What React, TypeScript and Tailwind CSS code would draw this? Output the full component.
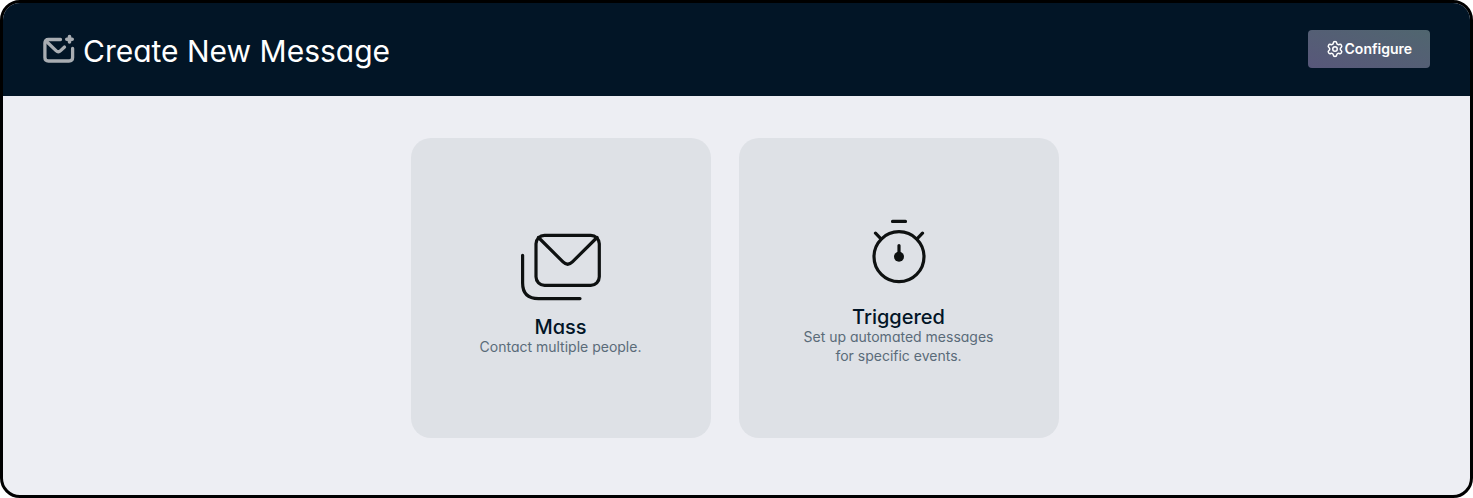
import { Settings } from 'lucide-react';
import type { ReactNode } from 'react';

interface MessageTypeCardProps {
  title: string;
  description: string;
  icon: ReactNode;
}

function NewMessageIcon() {
  return (
    <svg className="h-8 w-8 shrink-0" viewBox="0 0 32 32" fill="none" stroke="#a9adb2" strokeWidth="3.3" strokeLinecap="round" strokeLinejoin="round" aria-hidden="true">
      <path d="M17.5 6.5H5.5Q1.9 6.5 1.9 10V24.5Q1.9 28 5.5 28H26Q29.6 28 29.6 24.5V15.5" />
      <path d="M3 8L13 17.6Q15.3 19.8 17.6 17.6L21.5 14" />
      <path d="M26.5 3.6V9M23.8 6.3H29.2" strokeWidth="3.6" />
    </svg>
  );
}

function MassIcon() {
  return (
    <svg className="h-24 w-24" viewBox="0 1 96 96" fill="none" stroke="#0e1111" strokeWidth="3.2" strokeLinecap="round" strokeLinejoin="round" aria-hidden="true">
      <rect x="23" y="15.3" width="63.3" height="50" rx="8.5" />
      <path d="M25.5 17.5L50 41.9Q54.7 46.5 59.4 41.9L84 17.5" />
      <path d="M9.6 35.3V63Q9.6 78.6 25.5 78.6H67" />
    </svg>
  );
}

function TriggeredIcon() {
  return (
    <svg className="h-24 w-24" viewBox="0 1 96 96" fill="none" stroke="#0e1111" strokeWidth="3.2" strokeLinecap="round" aria-hidden="true">
      <circle cx="48" cy="46.7" r="25" />
      <path d="M41.5 11.4H54.5M24.5 23.2L30 28.8M71.5 23.2L66 28.8M48 35.5V46" />
      <circle cx="48" cy="46.7" r="5" fill="#0e1111" stroke="none" />
    </svg>
  );
}

function MessageTypeCard({ title, description, icon }: MessageTypeCardProps) {
  return (
    <button
      type="button"
      className="flex min-h-[300px] min-w-[300px] cursor-pointer flex-col items-center justify-center rounded-[20px] bg-[#dee1e6] px-16 text-center hover:bg-[#d6dae0]"
    >
      {icon}
      <span className="text-xl leading-5 font-medium text-[#021526]">{title}</span>
      <span className="max-w-48 text-sm leading-[19px] text-[#5a6b79]">{description}</span>
    </button>
  );
}

const messageTypes: MessageTypeCardProps[] = [
  { title: 'Mass', description: 'Contact multiple people.', icon: <MassIcon /> },
  { title: 'Triggered', description: 'Set up automated messages for specific events.', icon: <TriggeredIcon /> },
];

export default function App() {
  return (
    <div className="flex min-h-screen flex-col overflow-hidden rounded-[20px] border-3 border-black bg-[#edeef3] font-['Inter',sans-serif] [font-feature-settings:'cv11'] [font-optical-sizing:none]">
      <header className="flex min-h-[93px] items-center justify-between bg-[#021526] px-10 pb-px">
        <div className="flex items-center gap-2">
          <NewMessageIcon />
          <h1 className="pt-1 text-3xl text-white">Create New Message</h1>
        </div>
        <button
          type="button"
          className="flex cursor-pointer items-center gap-px rounded bg-linear-to-tr from-[#58577a] to-[#50666f] px-[18px] py-[9px] text-sm font-semibold text-white"
        >
          <Settings className="h-[18px] w-[18px]" />
          Configure
        </button>
      </header>
      <main className="flex flex-wrap justify-center gap-7 py-[42px] pr-10 pl-9">
        {messageTypes.map((type) => (
          <MessageTypeCard key={type.title} {...type} />
        ))}
      </main>
    </div>
  );
}
